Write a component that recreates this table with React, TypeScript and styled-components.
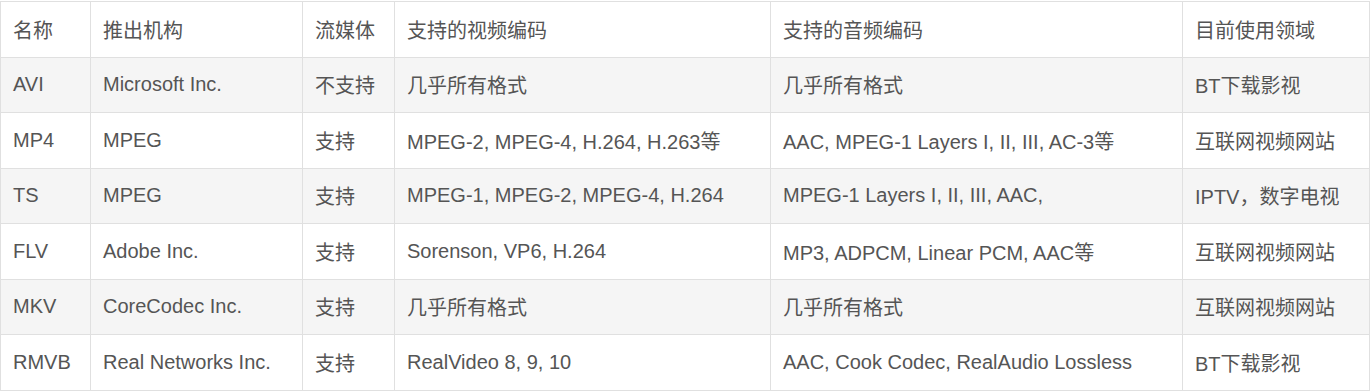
import React from "react";
import styled, { createGlobalStyle } from "styled-components";

const GlobalStyle = createGlobalStyle`
    html, body {
        margin: 0;
        padding: 0;
        background: #ffffff;
    }
    body {
        font-family: "Liberation Sans", Arial, "Noto Sans CJK SC", sans-serif;
        color: #555555;
    }
`;

const columns = [
    { title: "名称", width: 90 },
    { title: "推出机构", width: 212 },
    { title: "流媒体", width: 92 },
    { title: "支持的视频编码", width: 376 },
    { title: "支持的音频编码", width: 412 },
    { title: "目前使用领域", width: 187 },
];

const rows = [
    ["AVI", "Microsoft Inc.", "不支持", "几乎所有格式", "几乎所有格式", "BT下载影视"],
    [
        "MP4",
        "MPEG",
        "支持",
        "MPEG-2, MPEG-4, H.264, H.263等",
        "AAC, MPEG-1 Layers I, II, III, AC-3等",
        "互联网视频网站",
    ],
    [
        "TS",
        "MPEG",
        "支持",
        "MPEG-1, MPEG-2, MPEG-4, H.264",
        "MPEG-1 Layers I, II, III, AAC,",
        "IPTV，数字电视",
    ],
    [
        "FLV",
        "Adobe Inc.",
        "支持",
        "Sorenson, VP6, H.264",
        "MP3, ADPCM, Linear PCM, AAC等",
        "互联网视频网站",
    ],
    ["MKV", "CoreCodec Inc.", "支持", "几乎所有格式", "几乎所有格式", "互联网视频网站"],
    [
        "RMVB",
        "Real Networks Inc.",
        "支持",
        "RealVideo 8, 9, 10",
        "AAC, Cook Codec, RealAudio Lossless",
        "BT下载影视",
    ],
];

function App() {
    return (
        <>
            <GlobalStyle />
            <Wrapper>
                <Table>
                    <colgroup>
                        {columns.map((c) => (
                            <col key={c.title} style={{ width: c.width }} />
                        ))}
                    </colgroup>
                    <thead>
                        <Row striped={false}>
                            {columns.map((c) => (
                                <HeadCell key={c.title}>{c.title}</HeadCell>
                            ))}
                        </Row>
                    </thead>
                    <tbody>
                        {rows.map((r, i) => (
                            <Row key={r[0]} striped={i % 2 === 0}>
                                {r.map((cell, j) => (
                                    <Cell key={j}>{cell}</Cell>
                                ))}
                            </Row>
                        ))}
                    </tbody>
                </Table>
            </Wrapper>
        </>
    );
}

const Wrapper = styled.div`
    padding-top: 1px;
    width: 1370px;
`;

const Table = styled.table`
    width: 1369px;
    table-layout: fixed;
    border-collapse: collapse;
    font-size: 20px;
    color: #555555;
`;

const Row = styled.tr.withConfig({
    shouldForwardProp: (p) => p !== "striped",
})<{ striped: boolean }>`
    height: 55.5px;
    background-color: ${(props) => (props.striped ? "#f5f5f5" : "#ffffff")};
`;

const Cell = styled.td`
    border: 1px solid #e0e0e0;
    padding: 0 12px;
    text-align: left;
    vertical-align: middle;
    white-space: nowrap;
    font-weight: normal;
`;

const HeadCell = styled(Cell).attrs({ as: "th" })``;

export default App;
